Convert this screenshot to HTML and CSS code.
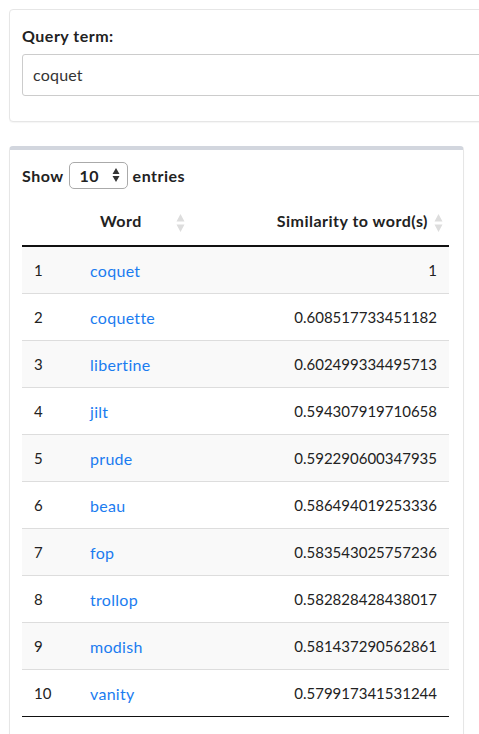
FILE: index.html
```html
<!DOCTYPE html>
<html>
<head>
<meta charset="utf-8">
<link rel="stylesheet" href="styles.css">
</head>
<body>
<div class="card query-card">
  <label class="label">Query term:</label>
  <div class="input">coquet</div>
</div>
<div class="card table-card">
  <div class="length">
    <span>Show</span>
    <span class="select">10
      <svg class="spin" width="8" height="16" viewBox="0 0 8 16"><path d="M4 1 L7.5 7 H0.5 Z M4 15 L7.5 9 H0.5 Z" fill="#333"/></svg>
    </span>
    <span>entries</span>
  </div>
  <table class="tbl">
    <thead>
      <tr>
        <th class="c-idx"></th>
        <th class="c-word"><span class="hd">Word</span><svg class="sort" width="9" height="20" viewBox="0 0 9 20"><path d="M4.5 1 L8.5 8.5 H0.5 Z M4.5 19 L8.5 11.5 H0.5 Z" fill="#ddd"/></svg></th>
        <th class="c-sim"><span class="hd">Similarity to word(s)</span><svg class="sort" width="9" height="20" viewBox="0 0 9 20"><path d="M4.5 1 L8.5 8.5 H0.5 Z M4.5 19 L8.5 11.5 H0.5 Z" fill="#ddd"/></svg></th>
      </tr>
    </thead>
    <tbody>
      <tr><td>1</td><td><a>coquet</a></td><td class="num">1</td></tr>
      <tr><td>2</td><td><a>coquette</a></td><td class="num">0.608517733451182</td></tr>
      <tr><td>3</td><td><a>libertine</a></td><td class="num">0.602499334495713</td></tr>
      <tr><td>4</td><td><a>jilt</a></td><td class="num">0.594307919710658</td></tr>
      <tr><td>5</td><td><a>prude</a></td><td class="num">0.592290600347935</td></tr>
      <tr><td>6</td><td><a>beau</a></td><td class="num">0.586494019253336</td></tr>
      <tr><td>7</td><td><a>fop</a></td><td class="num">0.583543025757236</td></tr>
      <tr><td>8</td><td><a>trollop</a></td><td class="num">0.582828428438017</td></tr>
      <tr><td>9</td><td><a>modish</a></td><td class="num">0.581437290562861</td></tr>
      <tr><td>10</td><td><a>vanity</a></td><td class="num">0.579917341531244</td></tr>
    </tbody>
  </table>
</div>
</body>
</html>
```
FILE: styles.css
```css
html, body {
  margin: 0;
  padding: 0;
  background: #fff;
}
body {
  font-family: "Source Sans Pro", Lato, "Liberation Sans", sans-serif;
  font-size: 15px;
  color: #222;
  padding: 9px 0 0 9px;
  overflow: hidden;
}
.card {
  background: #fff;
  border: 1px solid #e6e6e6;
  border-radius: 4px;
  box-shadow: 0 1px 1px rgba(0,0,0,0.04);
  box-sizing: border-box;
}
.query-card {
  width: 520px;
  height: 113px;
  padding: 15px 12px 0 12px;
}
.label {
  display: block;
  font-weight: 700;
  font-size: 16px;
  letter-spacing: 0.5px;
  line-height: 22px;
  margin-bottom: 7px;
}
.input {
  height: 42px;
  box-sizing: border-box;
  border: 1px solid #ccc;
  border-radius: 3px;
  padding: 0 10px;
  line-height: 40px;
  font-size: 16px;
  letter-spacing: 0.2px;
  color: #333;
}
.table-card {
  margin-top: 24px;
  width: 455px;
  height: 600px;
  border-top: 4px solid #d2d6de;
  padding: 11px 13px 0 12px;
}
.length {
  display: flex;
  align-items: center;
  gap: 4px;
  font-weight: 700;
  font-size: 16px;
  letter-spacing: 0.5px;
  height: 28px;
}
.select {
  display: inline-flex;
  align-items: center;
  justify-content: space-between;
  width: 59px;
  height: 27px;
  box-sizing: border-box;
  border: 1px solid #aaa;
  border-radius: 5px;
  padding: 0 7px 0 10px;
  margin: 0 1px;
}
.tbl {
  width: 427px;
  border-collapse: collapse;
  margin-top: 12px;
}
.tbl th {
  font-weight: 700;
  font-size: 16px;
  letter-spacing: 0.5px;
  height: 42px;
  padding: 0 0 2px 0;
  border-bottom: 2px solid #111;
  vertical-align: middle;
  white-space: nowrap;
}
.c-idx { width: 68px; }
.c-word { text-align: left; }
.c-word .hd { margin-left: 10px; }
.c-word .sort { margin-left: 34px; }
.c-sim { text-align: right; }
.sort { vertical-align: middle; margin-left: 3px; }
.c-sim .sort { margin-left: 6px; margin-right: 6px; }
.tbl td {
  height: 46px;
  padding: 0 12px 0 0;
  border-top: 1px solid #ddd;
  white-space: nowrap;
}
.tbl tbody tr:first-child td { border-top: none; }
.tbl td:first-child { padding-left: 12px; }
.tbl tbody tr:nth-child(odd) { background: #f9f9f9; }
.tbl tbody tr:last-child td { border-bottom: 1px solid #111; }
.tbl a { color: #1b7cf0; font-size: 16px; letter-spacing: 0.3px; }
.num { text-align: right; }
```
